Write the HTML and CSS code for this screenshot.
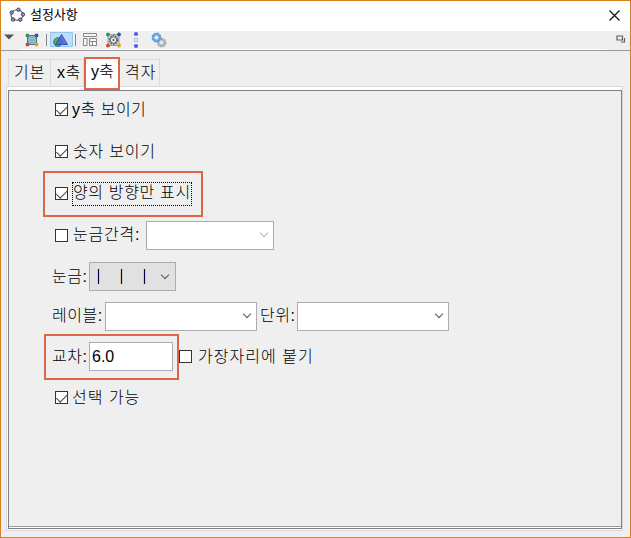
FILE: index.html
```html
<!DOCTYPE html>
<html lang="ko">
<head>
<meta charset="utf-8">
<title>설정사항</title>
<link rel="stylesheet" href="styles.css">
</head>
<body>
<main class="window">
  <header class="titlebar">
    <svg class="app-icon" width="18" height="16" viewBox="0 0 18 16"><ellipse cx="9" cy="8" rx="6" ry="5.2" fill="none" stroke="#555" stroke-width="1.1"/><g fill="#9999f5" stroke="#222" stroke-width=".8"><circle cx="10.5" cy="2.7" r="1.7"/><circle cx="3.7" cy="5.5" r="1.7"/><circle cx="15" cy="7.5" r="1.7"/><circle cx="5" cy="12.5" r="1.7"/><circle cx="12.3" cy="12.7" r="1.7"/></g></svg>
    <h1>설정사항</h1>
    <svg class="close" width="11" height="11" viewBox="0 0 11 11"><path d="M.5.5l10 10M10.5.5l-10 10" stroke="#111" stroke-width="1.2"/></svg>
  </header>
  <nav class="toolbar">
    <svg width="606" height="19" viewBox="0 0 606 19">
      <path d="M3 3.5h10l-5 5z" fill="#555"/>
      <g><path d="M26.500 4.500h9v9h-9z" fill="#85b8cc" stroke="#4c7480"/><circle cx="26.500" cy="4.500" r="1.900" fill="#3b8d5b"/><circle cx="35.500" cy="4.500" r="1.900" fill="#37549b"/><circle cx="26.500" cy="13.500" r="1.900" fill="#ca4238"/><circle cx="35.500" cy="13.500" r="1.900" fill="#d0a52d"/></g>
      <path d="M45.500 3v12M74.500 3v12" stroke="#858585"/>
      <path d="M49.500 1.500h22v14h-22z" fill="#c0ddf5" stroke="#8fc7f2"/>
      <circle cx="57" cy="11" r="4.300" fill="#54ae6c" stroke="#2c8746"/>
      <path d="M60.500 3.500l6 10h-12z" fill="#4b65db" fill-opacity=".85" stroke="#3452c5"/>
      <path d="M82.500 2.500h13v3h-13zM82.500 7.500h3.500v7h-3.500zM88.500 7.500h7v7h-7zM88.500 10.500h7M91.500 10.500v4" fill="#f6f6f6" stroke="#888"/>
      <path d="M107 3.500h11v11h-11z" fill="#d7e6e9" stroke="#86a6af"/>
      <circle cx="112.500" cy="9" r="4" fill="#ddd" stroke="#666" stroke-width="2" stroke-dasharray="1.700 .8"/><circle cx="112.500" cy="9" r="3.200" fill="#eee" stroke="#666"/><circle cx="112.500" cy="9" r="1.200" fill="#777"/>
      <circle cx="107" cy="3.500" r="1.900" fill="#398b55"/><circle cx="118" cy="3.500" r="1.900" fill="#3751a7"/><circle cx="107" cy="14.500" r="1.900" fill="#d34538"/><circle cx="118" cy="14.500" r="1.900" fill="#d3aa2b"/>
      <circle cx="135" cy="3" r="2.100" fill="#5757ee"/><circle cx="135" cy="9" r="1.600" fill="#fff" stroke="#aaa"/><circle cx="135" cy="15" r="2.100" fill="#5757ee"/>
      <circle cx="160.500" cy="11.500" r="3.800" fill="#c5c5c5" stroke="#a5a5a5" stroke-width="2" stroke-dasharray="2.200 .6"/><circle cx="160.500" cy="11.500" r="1.500" fill="#eee"/>
      <circle cx="155.500" cy="6.500" r="3.900" fill="#83b9e9" stroke="#5b9ad6" stroke-width="2" stroke-dasharray="2.400 .6"/><circle cx="155.500" cy="6.500" r="1.700" fill="#e4f3ff"/>
    </svg>
    <svg class="undock" width="10" height="8" viewBox="0 0 10 8"><path d="M1 1h5.500v4H1zM8.500 3v4H5" fill="none" stroke="#606060" stroke-width="1.200"/></svg>
  </nav>
  <div class="tabs">
    <div class="tab t1">기본</div><div class="tab t2">x축</div><div class="tab active">y축</div><div class="tab t4">격자</div>
  </div>
  <section class="frame"><div class="panel">
    <div class="row r1"><i class="check on"></i><span class="txt w1">y축 보이기</span></div>
    <div class="row r2"><i class="check on"></i><span class="txt w2">숫자 보이기</span></div>
    <div class="row r3"><div class="mark"><i class="check on"></i><span class="txt focus">양의 방향만 표시</span></div></div>
    <div class="row r4"><i class="check"></i><span class="txt w4">눈금간격:</span><div class="combo c1"><i class="arrow pale"></i></div></div>
    <div class="row r5"><span class="txt l5">눈금:</span><div class="combo ticks"><b></b><b></b><b></b><i class="arrow"></i></div></div>
    <div class="row r6"><span class="txt l6">레이블:</span><div class="combo c2"><i class="arrow"></i></div><span class="txt l7">단위:</span><div class="combo c2"><i class="arrow"></i></div></div>
    <div class="row r7"><div class="mark cross"><span class="txt l5">교차:</span><div class="field">6.0</div></div><i class="check"></i><span class="txt w7">가장자리에 붙기</span></div>
    <div class="row r8"><i class="check on"></i><span class="txt w8">선택 가능</span></div>
  </div></section>
</main>
</body>
</html>
```
FILE: styles.css
```css
* { box-sizing: border-box; }
body { margin: 0; font: 300 16px/20px "Liberation Sans", "Noto Sans CJK KR", sans-serif; color: #000; }
.window { width: 631px; height: 538px; border: 1px solid #d9811c; background: #efefef; overflow: hidden; }
.titlebar { height: 30px; background: #fff; display: flex; align-items: center; padding: 0 10px 2px 7px; }
.app-icon { margin-right: 4px; }
h1 { margin: 0; font-size: 13px; font-weight: 400; line-height: 20px; letter-spacing: -.05px; }
.close { margin-left: auto; }
.toolbar { height: 20px; display: flex; border-bottom: 1px solid #999; background: linear-gradient(#fff, #fff) 19px 18px / 587px 1px no-repeat; }
.undock { flex: none; margin: 4px 0 0 9px; }
.tabs { height: 35px; display: flex; align-items: flex-end; padding-left: 7px; }
.tab { height: 27px; border: 1px solid #d9d9d9; border-left: 0; border-bottom: 0; padding: 3px 0 0 5px; white-space: nowrap; letter-spacing: 1px; }
.t1 { width: 43px; border-left: 1px solid #d9d9d9; }
.t2 { width: 33px; padding-left: 6px; letter-spacing: .4px; }
.active { width: 36px; height: 33px; margin-bottom: -4px; border: 2px solid #db6746; background: #fff; padding: 3px 0 0 5px; position: relative; z-index: 1; letter-spacing: .1px; }
.t4 { width: 40px; padding-left: 5px; }
.frame { width: 617px; height: 445px; margin-left: 5px; border: 1px solid #d7d9dc; background: #fff; padding: 3px 0 1px 1px; }
.panel { height: 439px; width: 614px; border: 1px solid #7d8088; background: linear-gradient(#fff, #fff) 0 436px / 100% 1px no-repeat, linear-gradient(#999, #999) 0 435px / 100% 1px no-repeat, #efefef; }
.row { display: flex; align-items: center; padding-left: 46px; }
.r1 { height: 38px; }
.r2 { height: 46px; }
.r3 { height: 37px; padding-left: 34px; }
.r3 .mark { padding-left: 10px; width: 160px; height: 46px; }
.r4 { height: 46px; }
.r5 { height: 37px; padding-left: 43px; }
.r6 { height: 42px; padding-left: 43px; }
.r7 { height: 39px; padding-left: 35px; }
.r8 { height: 42px; }
.mark { flex: none; display: flex; align-items: center; border: 2px solid #db6746; }
.cross { width: 135px; height: 46px; padding-left: 6px; }
.check { flex: none; width: 13px; height: 13px; border: 1px solid #333; background: #fff; display: block; }
.r1 .check, .r2 .check { margin-bottom: 2px; }
.on::after { content: ""; display: block; width: 10px; height: 5px; margin: 2px 0 0 1px; border: solid #444; border-width: 0 0 1.500px 1.500px; transform: translate(-.5px, -.3px) rotate(-45deg); }
.txt { flex: none; white-space: nowrap; letter-spacing: .5px; }
.w1 { margin-left: 4px; }
.w2 { margin-left: 5px; letter-spacing: .8px; }
.focus { width: 120px; height: 24px; margin-left: 4px; border: 1px dotted #000; letter-spacing: .65px; }
.w4 { width: 73px; margin-left: 5px; letter-spacing: .75px; }
.l5 { width: 37px; }
.l6 { width: 53px; }
.l7 { width: 40px; padding-left: 3px; }
.w7 { margin-left: 6px; letter-spacing: 1.050px; }
.w8 { margin-left: 4px; letter-spacing: 1px; padding-top: 1px; }
.combo { flex: none; height: 29px; border: 1px solid #abadb3; background: #fff; display: flex; align-items: center; justify-content: flex-end; padding-right: 5px; }
.c1 { width: 128px; }
.c2 { width: 152px; }
.ticks { width: 87px; background: #e1e1e1; justify-content: flex-start; padding-left: 8px; }
.ticks b { width: 1px; height: 15px; margin-right: 22px; background: #100047; box-shadow: -1px 0 #e8c796, 1px 0 #acd3e0; }
.ticks .arrow { margin-left: -5px; }
.arrow { width: 6px; height: 6px; margin: -4px 1px 0 0; border: solid #555; border-width: 0 1.500px 1.500px 0; transform: rotate(45deg); }
.pale { border-color: #bbb; }
.field { width: 84px; height: 29px; border: 1px solid #abadb3; background: #fff; font-weight: 400; line-height: 27px; padding-left: 2px; }
```
